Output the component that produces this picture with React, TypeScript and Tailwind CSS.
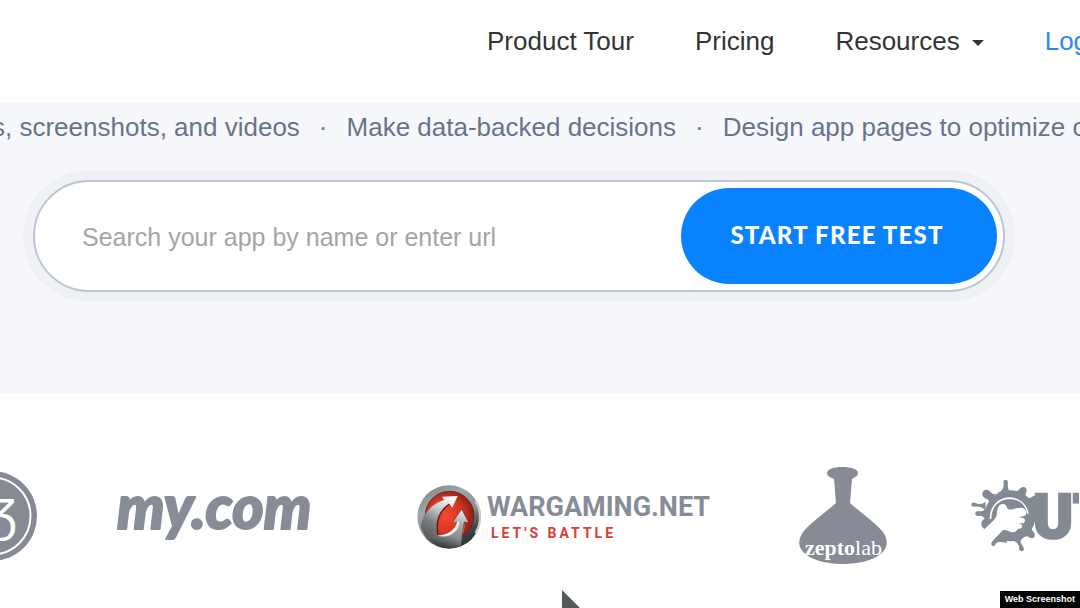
import { ReactNode } from "react";

const NAV_LINKS = ["Product Tour", "Pricing"];

const FEATURES = [
  "s, screenshots, and videos",
  "Make data-backed decisions",
  "Design app pages to optimize conversion",
];

function NavLink({ children }: { children: ReactNode }) {
  return (
    <a href="#" className="text-[#333437] hover:text-black">
      {children}
    </a>
  );
}

function Header() {
  return (
    <header className="overflow-hidden bg-white">
      <nav className="flex h-[103px] items-start gap-[61px] whitespace-nowrap pt-[23px] pl-[487px] text-[26px] leading-9">
        {NAV_LINKS.map((label) => (
          <NavLink key={label}>{label}</NavLink>
        ))}
        <button type="button" className="flex items-center gap-3 text-[#333437]">
          Resources
          <span className="mt-1 border-x-6 border-t-6 border-x-transparent border-t-[#333437]" />
        </button>
        <a href="#" className="text-[#2b85ff]">
          Login
        </a>
      </nav>
    </header>
  );
}

function Hero() {
  return (
    <section className="h-[290px] overflow-hidden bg-[#f6f8fc]">
      <ul className="-ml-2 flex gap-[19px] whitespace-nowrap pt-1.5 text-[26px] leading-9 text-[#69738c]">
        {FEATURES.map((feature, i) => (
          <li key={feature} className="flex gap-[19px]">
            {i > 0 && <span>·</span>}
            {feature}
          </li>
        ))}
      </ul>

      <form
        className="mt-[35px] mr-[75px] ml-[33px] flex h-28 rounded-full border-2 border-[#bdc5d5] bg-white p-1.5 shadow-[0_0_0_10px_#f0f1f4]"
        onSubmit={(e) => e.preventDefault()}
      >
        <input
          type="text"
          aria-label="Search your app"
          placeholder="Search your app by name or enter url"
          className="min-w-0 flex-1 bg-transparent pt-1 pl-[41px] text-[25px] text-[#555] outline-none placeholder:text-[#a3a5a8]"
        />
        <button
          type="submit"
          className="w-[316px] rounded-full bg-[#0882ff] pr-1 pb-0.5 font-['Lato',sans-serif] text-2xl font-black tracking-wider text-white"
        >
          START FREE TEST
        </button>
      </form>
    </section>
  );
}

function RoundLogo() {
  return (
    <svg viewBox="0 0 37 90" className="h-[90px] w-[37px] shrink-0">
      <circle cx="-8" cy="45" r="45" fill="#868a95" />
      <circle cx="-8" cy="45" r="38.5" fill="none" stroke="#fff" strokeWidth="2" />
      <text
        x="-12"
        y="60"
        fill="#fff"
        fontSize="47"
        fontWeight="300"
        fontFamily="'Open Sans', sans-serif"
      >
        Ʒ
      </text>
    </svg>
  );
}

function MyComLogo() {
  return (
    <svg viewBox="0 0 200 76" className="h-[76px] w-[200px] shrink-0">
      <text
        x="0"
        y="38"
        fill="#878c96"
        stroke="#878c96"
        strokeWidth="2"
        strokeLinejoin="round"
        fontSize="60"
        fontWeight="900"
        fontStyle="italic"
        fontFamily="Lato, sans-serif"
      >
        my.com
      </text>
    </svg>
  );
}

function WargamingLogo() {
  return (
    <div className="flex w-[288px] shrink-0 items-center gap-1.5">
      <svg viewBox="15 16 192 192" className="h-16 w-16 shrink-0">
        <defs>
          <linearGradient id="wgRing" x1="0.1" y1="0" x2="0.7" y2="1">
            <stop offset="0" stopColor="#7b7e7f" />
            <stop offset="0.3" stopColor="#a3a6a6" />
            <stop offset="0.6" stopColor="#8f9293" />
            <stop offset="0.85" stopColor="#3f4346" />
            <stop offset="1" stopColor="#2b2f33" />
          </linearGradient>
          <radialGradient id="wgRed" cx="0.42" cy="0.5" r="0.58">
            <stop offset="0" stopColor="#f4492f" />
            <stop offset="0.6" stopColor="#d53522" />
            <stop offset="1" stopColor="#8b1c12" />
          </radialGradient>
          <linearGradient id="wgArrow" x1="0.8" y1="0" x2="0.35" y2="1">
            <stop offset="0" stopColor="#fff" />
            <stop offset="0.35" stopColor="#c3c5c6" />
            <stop offset="0.6" stopColor="#7d8082" />
            <stop offset="1" stopColor="#4b4f52" />
          </linearGradient>
          <linearGradient id="wgHook" x1="0.7" y1="0" x2="0.4" y2="1">
            <stop offset="0" stopColor="#e8e9e9" />
            <stop offset="0.35" stopColor="#a9acad" />
            <stop offset="0.7" stopColor="#85888a" />
            <stop offset="1" stopColor="#34383b" />
          </linearGradient>
        </defs>
        <circle cx="111" cy="112" r="95" fill="url(#wgRing)" />
        <path
          d="M192 66A93 93 0 0 1 192 158"
          fill="none"
          stroke="#c9cccd"
          strokeWidth="7"
          strokeLinecap="round"
        />
        <circle cx="113" cy="108" r="73" fill="url(#wgRed)" stroke="#54302d" strokeWidth="3" />
        <path
          d="M26 138C32 104 58 72 96 61L90 51L137 49L121 84L112 73C84 92 70 124 78 166L112 205C70 204 36 180 26 138Z"
          fill="url(#wgArrow)"
        />
        <path
          d="M112 73C84 92 70 124 78 166"
          fill="none"
          stroke="#5a1b16"
          strokeWidth="4"
        />
        <path
          d="M76 167C106 166 130 152 136 126L121 128L149 88L171 130L157 127C159 142 156 158 150 172L146 200C112 212 74 204 54 180Z"
          fill="url(#wgHook)"
        />
        <path
          d="M76 168C106 166 130 152 136 126L142 127C140 154 116 178 76 168Z"
          fill="#f4f4f4"
        />
        <path d="M121 128L149 88L171 130L157 127L150 172" fill="none" stroke="#5a1b16" strokeWidth="2" />
      </svg>
      <div className="pt-1 whitespace-nowrap">
        <div className="font-['Roboto',sans-serif] text-[27px] leading-7 font-bold text-[#878c97]">
          WARGAMING.NET
        </div>
        <div className="pl-1 font-['Roboto',sans-serif] text-sm leading-6 font-bold tracking-[3px] text-[#dc3d36]">
          LET'S BATTLE
        </div>
      </div>
    </div>
  );
}

function ZeptolabLogo() {
  return (
    <svg viewBox="0 0 88 98" className="h-[98px] w-[88px] shrink-0">
      <path
        d="M28 6C28 2 35 0 43.500 0S59 2 59 6C59 9 56 10 53 12L51 36C62 46 76 55 84 65C88 71 89 77 86 82C80 92 62 97 44 97S8 92 2 82C-1 77 0 71 4 65C12 55 26 46 37 36L35 12C31 10 28 9 28 6Z"
        fill="#878b95"
      />
      <text x="6" y="88" fill="#fff" fontSize="22" fontFamily="'Liberation Serif', serif">
        <tspan fontWeight="700">zepto</tspan>
        <tspan>lab</tspan>
      </text>
    </svg>
  );
}

function OutfitLogo() {
  return (
    <svg viewBox="16 14 326 222" className="h-[74px] w-[108px] shrink-0">
      <circle cx="134" cy="124" r="77" fill="#848a93" />
      {/* paint drops around the splat */}
      <g fill="#848a93">
        <path d="M114 22C114 13 127 13 127 22C128 36 124 46 140 56H96C114 48 116 36 114 22Z" />
        <path d="M53 67C44 54 58 40 70 48C78 54 78 60 90 58L74 88C72 74 62 76 53 67Z" />
        <path d="M26 97C14 98 14 83 25 84C34 89 48 92 60 82L60 108C50 98 38 95 26 97Z" />
        <path d="M38 125C26 126 26 110 38 110C46 112 54 110 60 102V136C54 126 46 122 38 125Z" />
        <path d="M56 164C44 154 44 142 56 134L74 120L90 150Z" />
        <path d="M146 54C158 54 160 40 172 38C184 36 187 48 181 58C179 68 190 76 202 66C208 60 214 66 214 80V122C210 134 202 134 202 144L180 160Z" />
        <path d="M198 130C196 152 194 160 204 172C214 184 206 196 194 191C184 182 176 186 168 196C160 206 174 214 176 224C176 234 162 234 161 224C161 212 158 206 144 200L172 160Z" />
      </g>
      <path
        d="M54 167L86 136C98 124 92 116 96 104C99 90 112 84 121 92L127 104C142 110 152 98 168 100C180 102 186 112 181 122C177 128 168 125 160 128C176 129 182 136 178 142C176 149 168 145 160 148C174 150 172 161 165 163C156 161 152 176 142 174C130 174 122 165 112 168L80 210L40 225L20 190Z"
        fill="#fff"
      />
      <path d="M110 170C94 188 84 194 78 206C74 216 86 220 90 210C96 200 106 204 124 206V170Z" fill="#848a93" />
      <path d="M75 134C74 96 100 72 132 71C162 72 182 90 188 118" fill="none" stroke="#fff" strokeWidth="5" />
      <text
        x="203"
        y="190"
        fill="#848a93"
        stroke="#848a93"
        strokeWidth="8"
        fontSize="182"
        fontWeight="900"
        fontFamily="Roboto, sans-serif"
      >
        UT
      </text>
    </svg>
  );
}

function Customers() {
  return (
    <section className="flex items-start overflow-hidden bg-white pt-[74px]">
      <div className="mt-1">
        <RoundLogo />
      </div>
      <div className="mt-6 ml-20">
        <MyComLogo />
      </div>
      <div className="mt-[18px] ml-25">
        <WargamingLogo />
      </div>
      <div className="ml-[94px]">
        <ZeptolabLogo />
      </div>
      <div className="mt-3 ml-21">
        <OutfitLogo />
      </div>
    </section>
  );
}

export default function App() {
  return (
    <div className="relative min-h-screen overflow-hidden bg-white font-['Liberation_Sans',Arial,sans-serif]">
      <Header />
      <main>
        <Hero />
        <Customers />
      </main>

      {/* mouse pointer, half off the page */}
      <svg viewBox="0 0 18 18" className="absolute bottom-0 left-[52%] h-[18px] w-[18px]">
        <path d="M0 0L18 18H0Z" fill="#555957" />
      </svg>

      <div className="absolute right-0 bottom-0 bg-black px-[5px] text-[9px] leading-[17px] font-bold text-white">
        Web Screenshot
      </div>
    </div>
  );
}
